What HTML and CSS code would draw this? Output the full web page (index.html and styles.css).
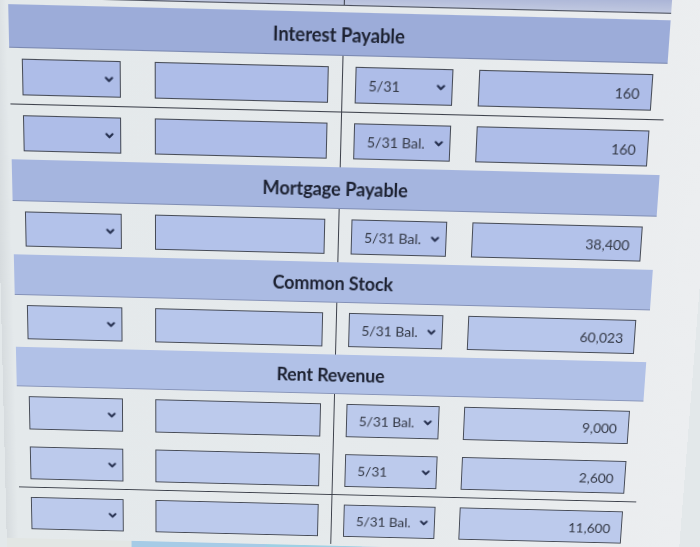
FILE: index.html
```html
<!DOCTYPE html>
<html>
<head>
<meta charset="utf-8">
<link rel="stylesheet" href="styles.css">
</head>
<body>
<div class="screen">
  <div class="prev"><div class="prev-l"></div><div class="prev-r"></div></div>
  <div class="acct">
    <section class="sec s1">
      <div class="hd">Interest Payable</div>
      <div class="row">
        <div class="side l"><div class="sel"><span></span><svg class="chev" viewBox="0 0 10 7"><polyline points="1.5,1.5 5,5 8.5,1.5"/></svg></div><div class="inp"></div></div>
        <div class="side r"><div class="sel"><span>5/31</span><svg class="chev" viewBox="0 0 10 7"><polyline points="1.5,1.5 5,5 8.5,1.5"/></svg></div><div class="inp">160</div></div>
      </div>
      <div class="row total">
        <div class="side l"><div class="sel"><span></span><svg class="chev" viewBox="0 0 10 7"><polyline points="1.5,1.5 5,5 8.5,1.5"/></svg></div><div class="inp"></div></div>
        <div class="side r"><div class="sel"><span>5/31 Bal.</span><svg class="chev" viewBox="0 0 10 7"><polyline points="1.5,1.5 5,5 8.5,1.5"/></svg></div><div class="inp">160</div></div>
      </div>
    </section>
    <section class="sec s2">
      <div class="hd">Mortgage Payable</div>
      <div class="row">
        <div class="side l"><div class="sel"><span></span><svg class="chev" viewBox="0 0 10 7"><polyline points="1.5,1.5 5,5 8.5,1.5"/></svg></div><div class="inp"></div></div>
        <div class="side r"><div class="sel"><span>5/31 Bal.</span><svg class="chev" viewBox="0 0 10 7"><polyline points="1.5,1.5 5,5 8.5,1.5"/></svg></div><div class="inp">38,400</div></div>
      </div>
    </section>
    <section class="sec s3">
      <div class="hd">Common Stock</div>
      <div class="row">
        <div class="side l"><div class="sel"><span></span><svg class="chev" viewBox="0 0 10 7"><polyline points="1.5,1.5 5,5 8.5,1.5"/></svg></div><div class="inp"></div></div>
        <div class="side r"><div class="sel"><span>5/31 Bal.</span><svg class="chev" viewBox="0 0 10 7"><polyline points="1.5,1.5 5,5 8.5,1.5"/></svg></div><div class="inp">60,023</div></div>
      </div>
    </section>
    <section class="sec s4">
      <div class="hd">Rent Revenue</div>
      <div class="row">
        <div class="side l"><div class="sel"><span></span><svg class="chev" viewBox="0 0 10 7"><polyline points="1.5,1.5 5,5 8.5,1.5"/></svg></div><div class="inp"></div></div>
        <div class="side r"><div class="sel"><span>5/31 Bal.</span><svg class="chev" viewBox="0 0 10 7"><polyline points="1.5,1.5 5,5 8.5,1.5"/></svg></div><div class="inp">9,000</div></div>
      </div>
      <div class="row">
        <div class="side l"><div class="sel"><span></span><svg class="chev" viewBox="0 0 10 7"><polyline points="1.5,1.5 5,5 8.5,1.5"/></svg></div><div class="inp"></div></div>
        <div class="side r"><div class="sel"><span>5/31</span><svg class="chev" viewBox="0 0 10 7"><polyline points="1.5,1.5 5,5 8.5,1.5"/></svg></div><div class="inp">2,600</div></div>
      </div>
      <div class="row total">
        <div class="side l"><div class="sel"><span></span><svg class="chev" viewBox="0 0 10 7"><polyline points="1.5,1.5 5,5 8.5,1.5"/></svg></div><div class="inp"></div></div>
        <div class="side r"><div class="sel"><span>5/31 Bal.</span><svg class="chev" viewBox="0 0 10 7"><polyline points="1.5,1.5 5,5 8.5,1.5"/></svg></div><div class="inp">11,600</div></div>
      </div>
    </section>
  </div>
  <div class="taskbar"><div class="tb-icons"></div><div class="tb-a"></div><div class="tb-b"></div><div class="tb-c"></div></div>
</div>
</body>
</html>
```
FILE: styles.css
```css
html, body {
  margin: 0;
  padding: 0;
  width: 700px;
  height: 547px;
  overflow: hidden;
  background: #e3e8ea;
}

.screen {
  width: 700px;
  height: 600px;
  background: linear-gradient(90deg, #d6dbde 0, #e4e9eb 12px, #e6eaec 60%, #eceef0 100%);
  font-family: "Lato", "Open Sans", sans-serif;
  color: #373c48;
  transform-origin: 333px 275px;
  transform: rotate(1.4deg) perspective(835px) rotateX(-7deg);
}

.prev {
  display: grid;
  grid-template-columns: 324px 314px;
  margin-left: 14px;
  width: 638px;
  height: 13px;
  background: linear-gradient(180deg, #a9b3d6, #c0c8e0);
  border-bottom: 1px solid #4a4f5c;
  margin-bottom: 6px;
}

.prev-l {
  border-right: 1px solid #3c404a;
}

.acct {
  margin-left: 14px;
  width: 638px;
}

.hd {
  height: 41px;
  box-sizing: border-box;
  padding-top: 2px;
  display: flex;
  align-items: center;
  justify-content: center;
  font-weight: 700;
  font-size: 18px;
  letter-spacing: -0.1px;
  color: #1c2131;
  border-bottom: 1px solid rgba(60, 70, 100, 0.35);
}

.row {
  display: grid;
  grid-template-columns: 324px 314px;
  height: 53px;
}

.row.total {
  border-top: 1px solid #3c404a;
}

.side {
  display: flex;
  align-items: flex-start;
  padding-top: 10px;
  box-sizing: border-box;
}

.side.l {
  padding-left: 12px;
  gap: 33px;
  border-right: 1px solid #3c404a;
}

.side.r {
  padding-left: 12px;
  gap: 25px;
}

.sel, .inp {
  height: 35px;
  box-sizing: border-box;
  border: 1px solid #464b56;
  font-size: 14px;
  color: #343946;
}

.sel {
  display: flex;
  align-items: center;
  justify-content: space-between;
  padding: 0 6px 0 12px;
}

.side.l .sel { width: 96px; }
.side.r .sel { width: 95px; }

.inp {
  width: 169px;
  display: flex;
  align-items: center;
  justify-content: flex-end;
  padding: 1px 11px 0 0;
}

.chev {
  width: 9px;
  height: 6px;
  fill: none;
  stroke: #26304f;
  stroke-width: 2.4;
  stroke-linecap: round;
  stroke-linejoin: round;
}

.s1 .hd { background: #9cacd9; }
.s1 .sel, .s1 .inp { background: #aebde8; }
.s2 .hd { background: #a5b5df; }
.s2 .sel, .s2 .inp { background: #b3c2ea; }
.s3 .hd { background: #abbbe3; }
.s3 .sel, .s3 .inp { background: #b7c6eb; }
.s4 .hd { background: #b1c1e7; }
.s4 .sel, .s4 .inp { background: #bccaec; }

.taskbar {
  display: flex;
  height: 30px;
  margin-top: 2px;
}

.tb-icons {
  width: 130px;
  background: #e2e6e4;
}

.tb-a {
  width: 140px;
  background: #a6cbe6;
}

.tb-b {
  width: 100px;
  background: #9fd0e4;
}

.tb-c {
  flex: 1;
  background: #b4d4e8;
}
```
